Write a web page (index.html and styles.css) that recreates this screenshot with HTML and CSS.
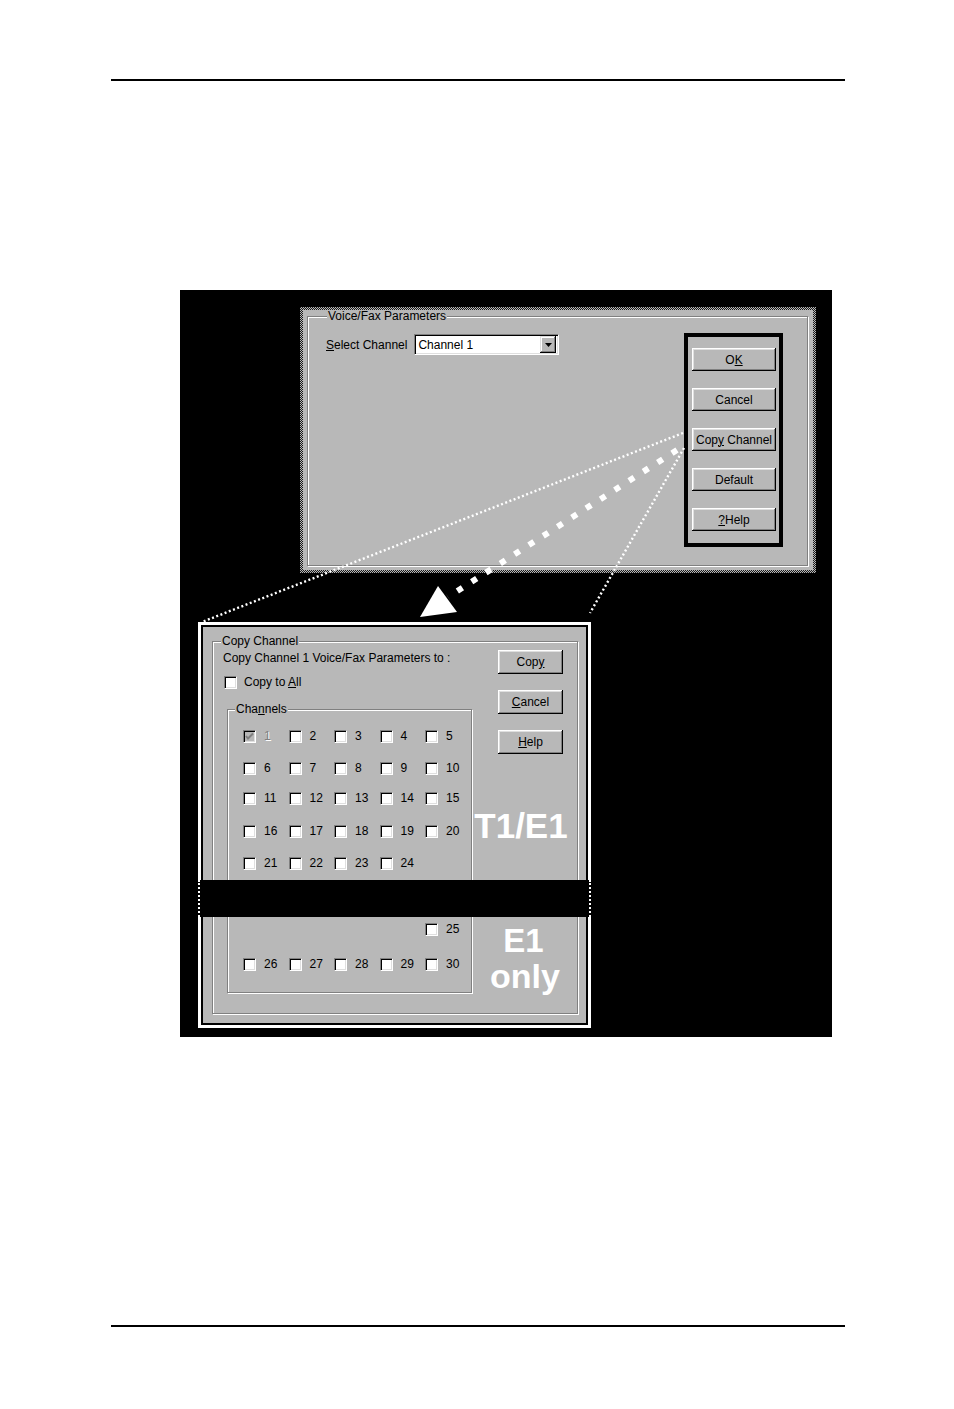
FILE: index.html
```html
<!DOCTYPE html>
<html>
<head>
<meta charset="utf-8">
<link rel="stylesheet" href="styles.css">
</head>
<body>
<div class="rule rule-top"></div>

<div class="figure">
  <div class="win-top">
    <div class="win-top-body">
      <div class="group group-top">
        <span class="group-title">Voice/Fax Parameters</span>
        <div class="select-row">
          <span class="lbl"><u>S</u>elect Channel</span>
          <div class="combo">
            <span class="combo-text">Channel 1</span>
            <span class="combo-btn"><svg width="7" height="4" viewBox="0 0 7 4"><polygon points="0,0 7,0 3.5,4" fill="#000"/></svg></span>
          </div>
        </div>
        <div class="btn-panel">
          <div class="btn"><span>O<u>K</u></span></div>
          <div class="btn"><span>Cancel</span></div>
          <div class="btn"><span>Cop<u>y</u> Channel</span></div>
          <div class="btn"><span>Default</span></div>
          <div class="btn"><span><u>?</u>Help</span></div>
        </div>
      </div>
    </div>
  </div>

  <div class="win-bottom">
    <div class="win-bottom-body">
      <div class="group group-copy">
        <span class="group-title">Copy Channel</span>
        <div class="copy-left">
          <div class="copy-text">Copy Channel 1 Voice/Fax Parameters to :</div>
          <div class="chk-row"><span class="chk"></span><span>Copy to <u>A</u>ll</span></div>
          <div class="group group-ch">
            <span class="group-title">Cha<u>n</u>nels</span>
            <div class="ch-grid">
              <div class="ch disabled"><span class="chk chk-dis"><svg width="11" height="11" viewBox="0 0 11 11"><polyline points="2,5 4,7.5 9,2.5" fill="none" stroke="#808080" stroke-width="2"/></svg></span><span class="num">1</span></div>
              <div class="ch"><span class="chk"></span><span class="num">2</span></div>
              <div class="ch"><span class="chk"></span><span class="num">3</span></div>
              <div class="ch"><span class="chk"></span><span class="num">4</span></div>
              <div class="ch"><span class="chk"></span><span class="num">5</span></div>
              <div class="ch"><span class="chk"></span><span class="num">6</span></div>
              <div class="ch"><span class="chk"></span><span class="num">7</span></div>
              <div class="ch"><span class="chk"></span><span class="num">8</span></div>
              <div class="ch"><span class="chk"></span><span class="num">9</span></div>
              <div class="ch"><span class="chk"></span><span class="num">10</span></div>
              <div class="ch"><span class="chk"></span><span class="num">11</span></div>
              <div class="ch"><span class="chk"></span><span class="num">12</span></div>
              <div class="ch"><span class="chk"></span><span class="num">13</span></div>
              <div class="ch"><span class="chk"></span><span class="num">14</span></div>
              <div class="ch"><span class="chk"></span><span class="num">15</span></div>
              <div class="ch"><span class="chk"></span><span class="num">16</span></div>
              <div class="ch"><span class="chk"></span><span class="num">17</span></div>
              <div class="ch"><span class="chk"></span><span class="num">18</span></div>
              <div class="ch"><span class="chk"></span><span class="num">19</span></div>
              <div class="ch"><span class="chk"></span><span class="num">20</span></div>
              <div class="ch"><span class="chk"></span><span class="num">21</span></div>
              <div class="ch"><span class="chk"></span><span class="num">22</span></div>
              <div class="ch"><span class="chk"></span><span class="num">23</span></div>
              <div class="ch"><span class="chk"></span><span class="num">24</span></div>
              <span class="ch-empty"></span>
              <span class="ch-empty"></span>
              <span class="ch-empty"></span>
              <span class="ch-empty"></span>
              <span class="ch-empty"></span>
              <div class="ch"><span class="chk"></span><span class="num">25</span></div>
              <div class="ch"><span class="chk"></span><span class="num">26</span></div>
              <div class="ch"><span class="chk"></span><span class="num">27</span></div>
              <div class="ch"><span class="chk"></span><span class="num">28</span></div>
              <div class="ch"><span class="chk"></span><span class="num">29</span></div>
              <div class="ch"><span class="chk"></span><span class="num">30</span></div>
            </div>
          </div>
        </div>
        <div class="copy-right">
          <div class="btn btn-copy"><span>Cop<u>y</u></span></div>
          <div class="btn btn-copy"><span><u>C</u>ancel</span></div>
          <div class="btn btn-copy"><span><u>H</u>elp</span></div>
          <div class="big big-t1">T1/E1</div>
          <div class="big big-e1">E1</div>
          <div class="big big-only">only</div>
        </div>
      </div>
    </div>
  </div>

  <div class="band"></div>

  <svg class="arrows" width="652" height="747" viewBox="0 0 652 747">
    <g stroke="#fff" fill="none">
      <line x1="503" y1="143" x2="22" y2="332" stroke-width="2.4" stroke-dasharray="2 2.5"/>
      <line x1="504" y1="158" x2="410" y2="323" stroke-width="2.4" stroke-dasharray="2 2.5"/>
      <line x1="497" y1="160" x2="268" y2="307" stroke-width="6" stroke-dasharray="6 11"/>
    </g>
    <polygon points="258,296 240,327 277,322" fill="#fff"/>
  </svg>
</div>

<div class="rule rule-bottom"></div>
</body>
</html>
```

FILE: styles.css
```css
* { box-sizing: border-box; }

body {
  margin: 0;
  background: #fff;
  color: #000;
  font-family: "Liberation Sans", Arial, sans-serif;
  font-size: 12px;
  line-height: 14px;
}

.rule {
  width: 734px;
  height: 2px;
  margin-left: 111px;
  background: #000;
}
.rule-top { margin-top: 79px; }
.rule-bottom { margin-top: 288px; }

.figure {
  position: relative;
  width: 652px;
  height: 747px;
  margin: 209px 0 0 180px;
  background: #000;
}

/* ---------- top dialog ---------- */
.win-top {
  position: absolute;
  left: 120px;
  top: 17px;
  width: 516px;
  height: 266px;
  padding: 3px;
  background: repeating-conic-gradient(#b8b8b8 0 25%, #1a1a1a 0 50%) 0 0 / 2px 2px;
}
.win-top-body {
  height: 100%;
  background: #b8b8b8;
  padding: 6px 5px 4px 4px;
  display: flex;
  flex-direction: column;
}

.group {
  position: relative;
  border: 1px solid #808080;
  box-shadow: 1px 1px 0 #fff, inset 1px 1px 0 #fff;
}
.group-title {
  position: absolute;
  top: -7px;
  line-height: 13px;
  padding: 0 1px;
  background: #b8b8b8;
  white-space: nowrap;
}

.group-top {
  flex: 1;
  display: flex;
  justify-content: space-between;
  align-items: flex-start;
  padding: 16px 24px 0 18px;
}
.group-top > .group-title { left: 19px; }

.select-row {
  display: flex;
  align-items: center;
  gap: 7px;
  margin-top: 1px;
}
.combo {
  width: 145px;
  height: 21px;
  display: flex;
  align-items: center;
  padding-left: 3px;
  background: #fff;
  border: 1px solid;
  border-color: #808080 #fff #fff #808080;
  box-shadow: inset 1px 1px 0 #000, inset -1px -1px 0 #dfdfdf;
}
.combo-btn {
  margin-left: auto;
  margin-right: 2px;
  width: 16px;
  height: 17px;
  display: flex;
  align-items: center;
  justify-content: center;
  background: #b8b8b8;
  box-shadow: inset -1px -1px 0 #000, inset 1px 1px 0 #dfdfdf, inset -2px -2px 0 #808080, inset 2px 2px 0 #fff;
}

.btn-panel {
  width: 99px;
  border: 4px solid #000;
  padding: 11px 3px 12px 4px;
  display: flex;
  flex-direction: column;
  gap: 17px;
}
.btn {
  height: 23px;
  display: flex;
  align-items: center;
  justify-content: center;
  background: #b8b8b8;
  white-space: nowrap;
  box-shadow: inset -1px -1px 0 #000, inset 1px 1px 0 #fff, inset -2px -2px 0 #808080, inset 2px 2px 0 #dfdfdf;
}

/* ---------- bottom dialog ---------- */
.win-bottom {
  position: absolute;
  left: 18px;
  top: 332px;
  width: 393px;
  height: 406px;
  border: 3px solid #fff;
  padding: 2px;
  background: #000;
}
.win-bottom-body {
  height: 100%;
  background: #b8b8b8;
  padding: 14px 8px 9px 9px;
  display: flex;
  flex-direction: column;
}
.group-copy {
  flex: 1;
  display: flex;
  padding: 8px 0 0 10px;
}
.group-copy > .group-title { left: 8px; }

.copy-left { width: 249px; }
.copy-text { margin-top: 1px; white-space: nowrap; }

.chk-row {
  display: flex;
  align-items: center;
  gap: 7px;
  height: 14px;
  margin: 10px 0 0 1px;
}

.chk {
  width: 13px;
  height: 13px;
  flex: none;
  display: flex;
  align-items: center;
  justify-content: center;
  background: #fff;
  border: 1px solid;
  border-color: #808080 #fff #fff #808080;
  box-shadow: inset 1px 1px 0 #000, inset -1px -1px 0 #dfdfdf;
}
.chk-dis { background: #b8b8b8; }

.group-ch {
  width: 245px;
  margin: 20px 0 0 4px;
  padding: 20px 0 21px 15px;
}
.group-ch > .group-title { left: 7px; }

.ch-grid {
  display: grid;
  grid-template-columns: repeat(4, 45.5px) auto;
  grid-template-rows: 32px 30px 33px 32px 66px 35px 13px;
}
.ch {
  display: flex;
  align-items: center;
  gap: 8px;
  height: 13px;
  line-height: 13px;
}
.ch.disabled .num {
  color: #808080;
  text-shadow: 1px 1px 0 #fff;
}

.copy-right {
  flex: 1;
  display: flex;
  flex-direction: column;
  padding-right: 7px;
}
.btn-copy {
  width: 65px;
  height: 24px;
  margin-left: 26px;
}
.btn-copy + .btn-copy { margin-top: 16px; }

.big {
  color: #fff;
  font-weight: bold;
  font-size: 35px;
  line-height: 35px;
  text-align: center;
}
.big-t1 { margin-top: 54px; }
.big-e1 {
  margin-top: 82px;
  font-size: 33px;
  line-height: 32px;
  padding-left: 5px;
}
.big-only {
  margin-top: 3px;
  font-size: 34px;
  line-height: 32px;
  padding-left: 8px;
}

.band {
  position: absolute;
  left: 18px;
  top: 590px;
  width: 393px;
  height: 37px;
  background: #000;
  border-left: 2px dotted #fff;
  border-right: 2px dotted #fff;
}

.arrows {
  position: absolute;
  left: 0;
  top: 0;
  pointer-events: none;
}
```
